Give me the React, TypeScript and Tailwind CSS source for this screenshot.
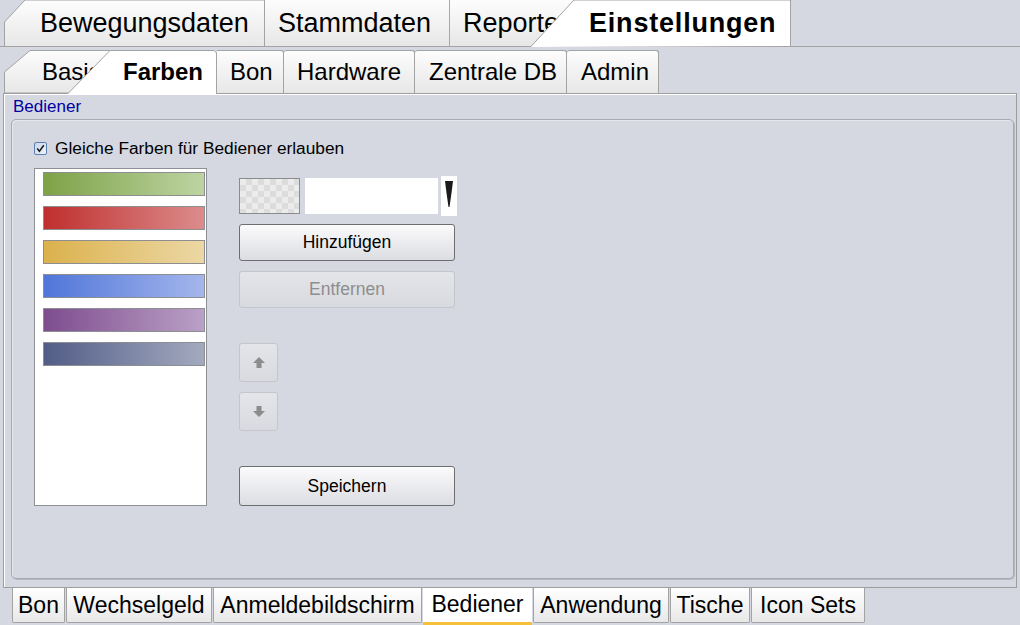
import React from 'react';

const bars = [
  { from: '#7ea247', to: '#bdd4a2' },
  { from: '#bf2f2e', to: '#dc8c8c' },
  { from: '#dbb14c', to: '#ecd8a5' },
  { from: '#5076da', to: '#a4b6eb' },
  { from: '#7e4d8e', to: '#baa0c6' },
  { from: '#525d87', to: '#a3aabf' },
];

const SlantTab: React.FC<{
  w: number;
  h: number;
  points: string;
  fill: string;
  id: string;
  className: string;
  children: React.ReactNode;
}> = ({ w, h, points, fill, id, className, children }) => (
  <div className={`relative flex shrink-0 items-center ${className}`}>
    <svg className="absolute left-0 top-0" width={w} height={h}>
      <defs>
        <linearGradient id={id} x1="0" y1="0" x2="0" y2="1">
          <stop offset="0" stopColor={fill === 'white' ? '#ffffff' : '#fdfdfd'} />
          <stop offset="1" stopColor={fill === 'white' ? '#ffffff' : '#e7e7e7'} />
        </linearGradient>
      </defs>
      <polygon points={points} fill={`url(#${id})`} stroke="#a3a3a3" strokeWidth="1" />
    </svg>
    <span className="relative whitespace-nowrap">{children}</span>
  </div>
);

const Btn: React.FC<{ children: React.ReactNode; disabled?: boolean; className?: string }> = ({
  children,
  disabled,
  className = '',
}) => (
  <div
    className={`flex items-center justify-center rounded-[3px] border text-[17.5px] ${
      disabled
        ? 'border-[#c4c6cc] bg-linear-to-b from-[#e3e5e9] to-[#d8dadf] text-[#8e8e8e]'
        : 'border-[#6e6e6e] bg-linear-to-b from-[#fbfbfc] to-[#dcdde2] text-black'
    } ${className}`}
  >
    {children}
  </div>
);

const Arrow: React.FC<{ down?: boolean }> = ({ down }) => (
  <svg width="12" height="11" viewBox="0 0 12 11" className={down ? 'rotate-180' : ''}>
    <polygon points="6,0 12,6 8.5,6 8.5,11 3.5,11 3.5,6 0,6" fill="#8c8c8c" />
  </svg>
);

export default function App() {
  return (
    <div className="flex h-[625px] w-[1020px] flex-col overflow-hidden bg-[#d5d8e0] font-['Liberation_Sans',Arial,sans-serif] text-black">
      {/* top level tabs */}
      <div className="flex h-[47px] shrink-0 items-end border-b border-[#a3a3a3] pl-[4px] text-[27px]">
        <SlantTab w={261} h={46} id="t1" fill="gray" points="0.5,47 0.5,22 21,0 260.5,0 260.5,47" className="h-[46px] w-[261px] pl-[36px]">
          Bewegungsdaten
        </SlantTab>
        <div className="flex h-[46px] w-[185px] shrink-0 items-center border-r border-[#a8a8a8] bg-linear-to-b from-[#fdfdfd] to-[#e7e7e7] pl-[13px]">
          Stammdaten
        </div>
        <div className="flex h-[46px] w-[125px] shrink-0 items-center bg-linear-to-b from-[#fdfdfd] to-[#e7e7e7] pl-[13px] whitespace-nowrap">
          Reporte
        </div>
        <SlantTab w={261} h={47} id="t2" fill="white" points="0,47.5 44,0 260.5,0 260.5,46.5" className="-mb-px ml-[-45px] h-[47px] w-[261px] pl-[59px] font-bold tracking-[0.8px]">
          Einstellungen
        </SlantTab>
      </div>

      {/* second level tabs */}
      <div className="relative z-10 flex h-[46px] shrink-0 items-end pl-[4px] text-[24px]">
        <SlantTab w={106} h={43} id="t3" fill="gray" points="0.5,43 0.5,22 26,0.5 106,0.5 106,43" className="h-[43px] w-[106px] pl-[38px]">
          Basis
        </SlantTab>
        <SlantTab w={150} h={44} id="t4" fill="white" points="0,44.5 43,0.5 147,0.5 149.5,3 149.5,44.5" className="-mb-px ml-[-43px] h-[44px] w-[150px] pl-[56px] font-bold">
          Farben
        </SlantTab>
        <div className="flex h-[43px] w-[67px] shrink-0 items-center rounded-tr-[3px] border-r border-t border-[#a3a3a3] bg-linear-to-b from-[#fdfdfd] to-[#e7e7e7] pl-[13px]">
          Bon
        </div>
        <div className="flex h-[43px] w-[131px] shrink-0 items-center rounded-t-[3px] border-r border-t border-[#a3a3a3] bg-linear-to-b from-[#fdfdfd] to-[#e7e7e7] pl-[13px]">
          Hardware
        </div>
        <div className="flex h-[43px] w-[152px] shrink-0 items-center rounded-t-[3px] border-r border-t border-[#a3a3a3] bg-linear-to-b from-[#fdfdfd] to-[#e7e7e7] pl-[14px]">
          Zentrale DB
        </div>
        <div className="flex h-[43px] w-[92px] shrink-0 items-center rounded-t-[3px] border-r border-t border-[#a3a3a3] bg-linear-to-b from-[#fdfdfd] to-[#e7e7e7] pl-[14px]">
          Admin
        </div>
      </div>

      {/* page */}
      <div className="mx-[3px] flex h-[495px] shrink-0 flex-col border border-[#9e9e9e] shadow-[inset_1px_1px_0_#ffffff]">
        <div className="h-[25px] pl-[9px] pt-[2px] text-[17px] leading-[22px] text-[#0000a6]">Bediener</div>
        <div className="ml-[7px] h-[460px] w-[1003px] rounded-[5px] border border-[#a6a9b1] shadow-[1px_1px_0_#b4b7bf,inset_1px_1px_0_#e6e8ee] pl-[22px] pt-[21px]">
          <div className="flex h-[15px] items-center gap-[8px] text-[17.3px]">
            <svg width="13" height="13" viewBox="0 0 13 13">
              <defs>
                <linearGradient id="cb" x1="0" y1="0" x2="1" y2="1">
                  <stop offset="0" stopColor="#c9d4e6" />
                  <stop offset="1" stopColor="#f2f5fa" />
                </linearGradient>
              </defs>
              <rect x="0.5" y="0.5" width="12" height="12" rx="1.5" fill="url(#cb)" stroke="#5a7fb3" />
              <path d="M3.2 6.6 L5.4 9.2 L9.8 3.2" fill="none" stroke="#1a1a1a" strokeWidth="1.5" />
            </svg>
            <span>Gleiche Farben für Bediener erlauben</span>
          </div>

          <div className="mt-[12px] flex gap-[32px]">
            <div className="flex h-[338px] w-[173px] flex-col gap-[10px] border border-[#8f9096] bg-white pl-[8px] pt-[3px]">
              {bars.map((b, i) => (
                <div
                  key={i}
                  className="h-[24px] w-[162px] border border-[#8d8e92]"
                  style={{ background: `linear-gradient(to right, ${b.from}, ${b.to})` }}
                />
              ))}
            </div>

            <div className="flex flex-col pt-[8px]">
              <div className="flex h-[40px] items-center">
                <div className="h-[36px] w-[61px] border border-[#8c8c8c] bg-[#ececec] bg-[image:conic-gradient(#dcdcdc_25%,#ececec_0_50%,#dcdcdc_0_75%,#ececec_0)] bg-[length:12px_12px]" />
                <div className="ml-[5px] h-[36px] w-[133px] bg-white" />
                <div className="ml-[3px] flex h-[40px] w-[16px] items-start justify-center bg-white pt-[5px]">
                  <svg width="8" height="26" viewBox="0 0 8 26">
                    <polygon points="0,0 8,0 6.5,12 4.5,26 3.5,26 1.5,12" fill="#1b1b1b" />
                  </svg>
                </div>
              </div>
              <Btn className="mt-[8px] h-[37px] w-[216px]">Hinzufügen</Btn>
              <Btn disabled className="mt-[10px] h-[37px] w-[216px]">Entfernen</Btn>
              <Btn disabled className="mt-[35px] h-[39px] w-[39px]">
                <Arrow />
              </Btn>
              <Btn disabled className="mt-[10px] h-[39px] w-[39px]">
                <Arrow down />
              </Btn>
              <Btn className="mt-[35px] h-[40px] w-[216px]">Speichern</Btn>
            </div>
          </div>
        </div>
      </div>

      {/* bottom tabs */}
      <div className="flex h-[37px] shrink-0 items-start gap-[1px] pl-[12px] text-[23px]">
        <div className="flex h-[35px] w-[53px] items-center justify-center rounded-b-[2px] border-x border-b border-[#a3a3a3] bg-linear-to-b from-[#ffffff] to-[#e8e8e8]">Bon</div>
        <div className="flex h-[35px] w-[146px] items-center justify-center rounded-b-[2px] border-x border-b border-[#a3a3a3] bg-linear-to-b from-[#ffffff] to-[#e8e8e8]">Wechselgeld</div>
        <div className="flex h-[35px] w-[209px] items-center justify-center rounded-b-[2px] border-x border-b border-[#a3a3a3] bg-linear-to-b from-[#ffffff] to-[#e8e8e8]">Anmeldebildschirm</div>
        <div className="flex h-[37px] w-[109px] items-center justify-center border-b-[3px] border-[#f6c13a] bg-white pb-[2px]">Bediener</div>
        <div className="flex h-[35px] w-[136px] items-center justify-center rounded-b-[2px] border-x border-b border-[#a3a3a3] bg-linear-to-b from-[#ffffff] to-[#e8e8e8]">Anwendung</div>
        <div className="flex h-[35px] w-[80px] items-center justify-center rounded-b-[2px] border-x border-b border-[#a3a3a3] bg-linear-to-b from-[#ffffff] to-[#e8e8e8]">Tische</div>
        <div className="flex h-[35px] w-[114px] items-center justify-center rounded-b-[2px] border-x border-b border-[#a3a3a3] bg-linear-to-b from-[#ffffff] to-[#e8e8e8]">Icon Sets</div>
      </div>
    </div>
  );
}
